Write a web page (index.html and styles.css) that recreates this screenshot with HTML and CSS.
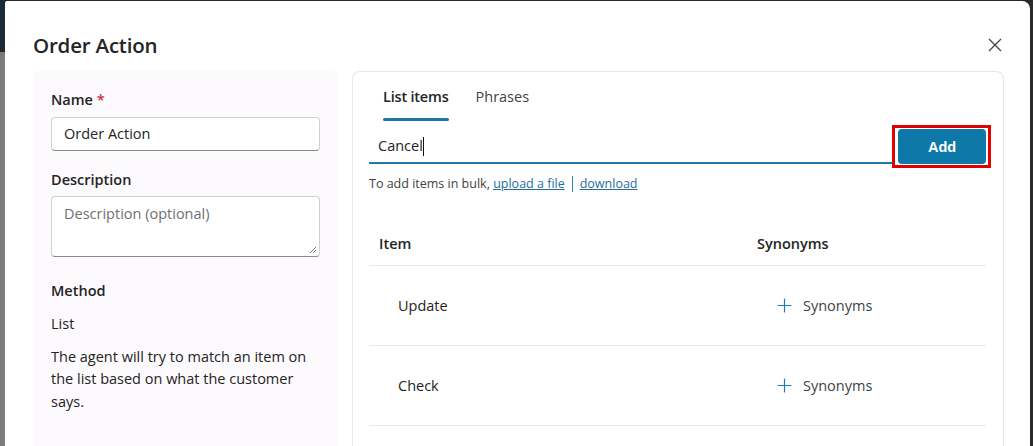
FILE: index.html
```html
<!DOCTYPE html>
<html lang="en">
<head>
<meta charset="utf-8">
<title>Order Action</title>
<link rel="stylesheet" href="styles.css">
</head>
<body>
<div class="dialog">
  <div class="dialog-head">
    <h1 class="title">Order Action</h1>
    <button class="close" aria-label="Close">
      <svg width="14" height="14" viewBox="0 0 14 14"><path d="M1 1L13 13M13 1L1 13" stroke="#424242" stroke-width="1.3" fill="none"/></svg>
    </button>
  </div>
  <div class="dialog-body">
    <aside class="side">
      <label class="label">Name <span class="req">*</span></label>
      <div class="field"><span>Order Action</span></div>
      <label class="label label-gap">Description</label>
      <div class="area">
        <span class="placeholder">Description (optional)</span>
        <svg class="grip" width="8" height="8" viewBox="0 0 8 8"><path d="M7 1L1 7M7 4L4 7" stroke="#777" stroke-width="1" fill="none"/></svg>
      </div>
      <div class="label method">Method</div>
      <div class="text list">List</div>
      <p class="text desc">The agent will try to match an item on the list based on what the customer says.</p>
    </aside>
    <section class="card">
      <div class="tabs">
        <div class="tab active">List items</div>
        <div class="tab">Phrases</div>
      </div>
      <div class="add-row">
        <div class="entry"><span>Cancel</span><span class="caret"></span></div>
        <div class="highlight"><button class="add">Add</button></div>
      </div>
      <div class="helper">To add items in bulk, <a class="link">upload a file</a><span class="sep"></span><a class="link">download</a></div>
      <div class="table">
        <div class="row head">
          <div class="c-item">Item</div>
          <div class="c-syn">Synonyms</div>
        </div>
        <div class="row">
          <div class="c-item cell">Update</div>
          <div class="c-syn cell syn-btn"><svg width="15" height="15" viewBox="0 0 15 15"><path d="M7.5 0.5V14.5M0.5 7.5H14.5" stroke="#1a7fae" stroke-width="1.2" fill="none"/></svg><span>Synonyms</span></div>
        </div>
        <div class="row">
          <div class="c-item cell">Check</div>
          <div class="c-syn cell syn-btn"><svg width="15" height="15" viewBox="0 0 15 15"><path d="M7.5 0.5V14.5M0.5 7.5H14.5" stroke="#1a7fae" stroke-width="1.2" fill="none"/></svg><span>Synonyms</span></div>
        </div>
      </div>
    </section>
  </div>
</div>
</body>
</html>
```

FILE: styles.css
```css
* { box-sizing: border-box; }
html, body { margin: 0; height: 100%; }
body {
  background: linear-gradient(to bottom, #1d2a35 0, #1d2a35 52px, #7c7c7c 52px);
  font-family: "Open Sans", "Noto Sans", sans-serif;
  color: #242424;
  padding: 1px 3px 0 5px;
  overflow: hidden;
  position: relative;
}
body::after {
  content: "";
  position: absolute;
  right: 0; top: 0; bottom: 0; width: 3px;
  background: #2b2b2b;
}
.dialog {
  background: #fff;
  height: 445px;
  border-radius: 2px 8px 0 0;
  padding: 0 26px 0 28px;
}
.dialog-head {
  display: flex;
  align-items: center;
  justify-content: space-between;
  height: 70px;
  padding-top: 18px;
}
.title {
  margin: 0;
  font-size: 20.5px;
  font-weight: 600;
  letter-spacing: -0.2px;
}
.close {
  background: none;
  border: 0;
  padding: 0;
  width: 14px;
  height: 14px;
  display: flex;
  margin-right: 2px;
}
.dialog-body {
  display: flex;
  gap: 15px;
  align-items: stretch;
  height: 380px;
}
.side {
  width: 304px;
  flex: none;
  background: #fdfafd;
  padding: 19px 17px 0 18px;
  border-radius: 4px 4px 0 0;
}
.label {
  display: block;
  font-size: 14.5px;
  font-weight: 600;
  line-height: 20px;
  height: 20px;
}
.req { color: #c4314b; }
.label-gap { margin-top: 19px; }
.field {
  margin-top: 7px;
  height: 34px;
  border: 1px solid #d1d1d1;
  border-bottom-color: #8a8a8a;
  border-radius: 4px;
  background: #fff;
  font-size: 14.5px;
  padding: 6px 12px;
  line-height: 20px;
}
.area {
  position: relative;
  margin-top: 6px;
  height: 61px;
  border: 1px solid #d1d1d1;
  border-bottom-color: #8a8a8a;
  border-radius: 4px;
  background: #fff;
  font-size: 14.5px;
  padding: 7px 12px;
  line-height: 19px;
}
.placeholder { color: #707070; }
.grip { position: absolute; right: 2px; bottom: 2px; }
.method { margin-top: 24px; }
.text {
  font-size: 14.5px;
  line-height: 22.5px;
}
.list { margin-top: 12px; }
.desc { margin: 10px 0 0; }

.card {
  flex: 1;
  border: 1px solid #e6e6e6;
  border-bottom: 0;
  border-radius: 8px 8px 0 0;
  padding: 0 17px 0 16px;
}
.tabs {
  display: flex;
  gap: 27px;
  padding-left: 14px;
  padding-top: 15px;
  height: 48px;
}
.tab {
  font-size: 14.5px;
  line-height: 20px;
  color: #424242;
  position: relative;
  height: 33px;
}
.tab.active {
  font-weight: 600;
  color: #242424;
  letter-spacing: -0.2px;
}
.tab.active::after {
  content: "";
  position: absolute;
  left: 0; right: 0; bottom: -1px;
  height: 3px;
  border-radius: 2px;
  background: #1b78a8;
}
.add-row {
  display: flex;
  align-items: center;
  margin-top: 9px;
}
.entry {
  flex: 1;
  height: 35px;
  border-bottom: 2px solid #1f7aa6;
  font-size: 14.5px;
  line-height: 20px;
  padding: 7px 9px 0;
  display: flex;
  align-items: flex-start;
}
.caret {
  display: inline-block;
  width: 1px;
  height: 19px;
  background: #111;
  margin-top: 1px;
}
.highlight {
  border: 3px solid #e00000;
  padding: 1px 2px 1px 3px;
  margin: -4px -5px -4px 0;
  display: flex;
}
.add {
  width: 88px;
  height: 35px;
  background: #0e78a8;
  color: #fff;
  border: 0;
  border-radius: 4px;
  font-family: "Liberation Sans", Arial, sans-serif;
  font-weight: 700;
  font-size: 14.5px;
}
.helper {
  margin-top: 11px;
  font-size: 12.5px;
  line-height: 18px;
  color: #424242;
  display: flex;
  align-items: center;
  white-space: pre;
}
.link {
  color: #1d6f9e;
  text-decoration: underline;
}
.sep {
  display: inline-block;
  width: 1px;
  height: 16px;
  background: #2a86b8;
  margin: 0 7px;
}
.table { margin-top: 29px; }
.row {
  display: grid;
  grid-template-columns: 376px 1fr;
  border-bottom: 1px solid #e9e9e9;
  height: 80px;
  align-items: center;
}
.row.head {
  height: 44px;
  font-weight: 600;
  font-size: 14.5px;
}
.c-item { padding-left: 10px; }
.c-syn { padding-left: 12px; }
.cell { font-size: 14.5px; }
.c-item.cell { padding-left: 29px; }
.syn-btn {
  display: flex;
  align-items: center;
  gap: 11px;
  padding-left: 32px;
  color: #424242;
}
```
